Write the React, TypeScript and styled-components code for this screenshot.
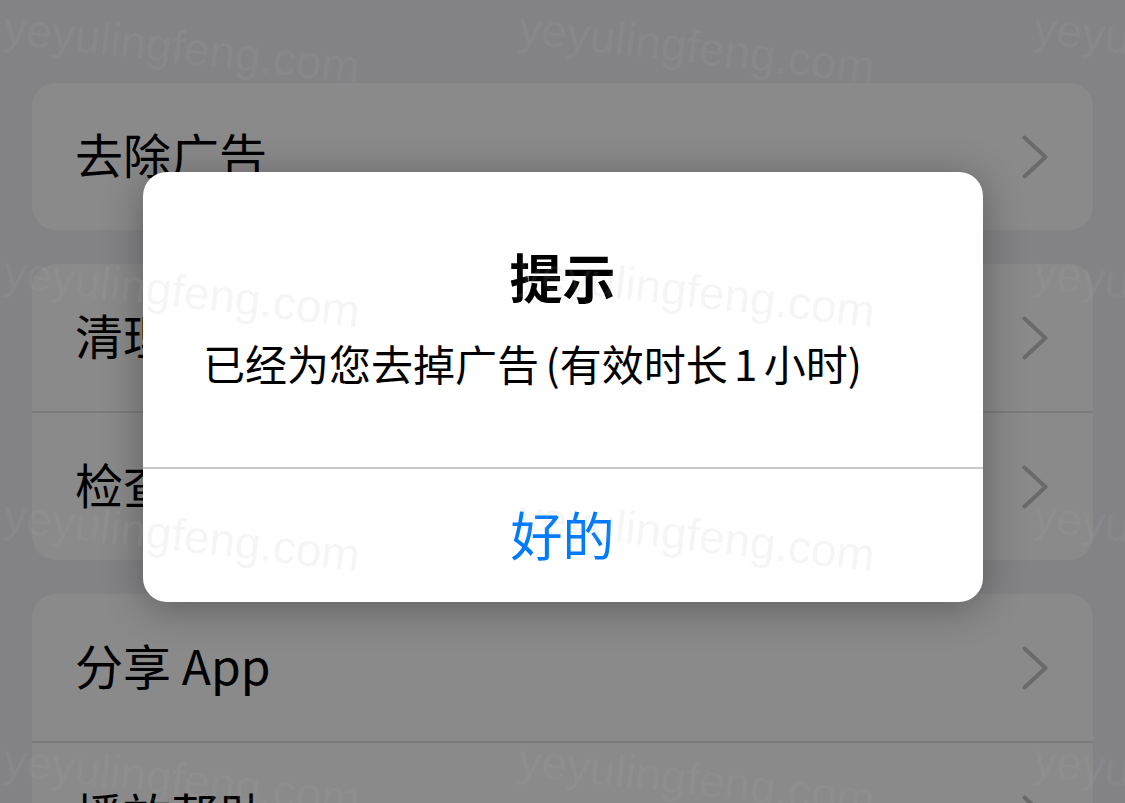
import React from "react";
import styled, { createGlobalStyle } from "styled-components";

const GlobalStyle = createGlobalStyle`
  html, body {
    margin: 0;
    padding: 0;
  }
  body {
    background: #f2f2f7;
    font-family: "Noto Sans CJK SC", sans-serif;
    overflow: hidden;
  }
  * { box-sizing: border-box; }
`;

const Page = styled.div`
  position: relative;
  width: 1125px;
  height: 803px;
  overflow: hidden;
  background: #f2f2f7;
  padding: 83px 32px 0;
  display: flex;
  flex-direction: column;
  gap: 34px;
`;

const Card = styled.div`
  flex-shrink: 0;
  background: #ffffff;
  border-radius: 24px;
  overflow: hidden;
  display: flex;
  flex-direction: column;
`;

const Row = styled.div`
  height: 147px;
  flex-shrink: 0;
  display: flex;
  align-items: center;
  justify-content: space-between;
  padding: 0 45px 0 43px;
`;

const RowLabel = styled.span`
  font-family: "Noto Sans CJK SC", sans-serif;
  font-size: 48px;
  line-height: 60px;
  color: #000;
  white-space: nowrap;
  margin-bottom: 8px;
`;

const RowDivider = styled.div`
  height: 2px;
  flex-shrink: 0;
  background: #e3e3e8;
`;

const Overlay = styled.div`
  position: absolute;
  inset: 0;
  background: rgba(0, 0, 0, 0.46);
  display: flex;
  align-items: center;
  justify-content: center;
  padding-bottom: 29px;
`;

const Dialog = styled.div`
  width: 840px;
  height: 430px;
  background: #ffffff;
  border-radius: 24px;
  box-shadow: 0 6px 40px rgba(0, 0, 0, 0.32);
  display: flex;
  flex-direction: column;
  overflow: hidden;
`;

const DialogBody = styled.div`
  flex: 1;
  display: flex;
  flex-direction: column;
  align-items: center;
  padding: 74px 40px 0;
  gap: 34px;
`;

const Title = styled.div`
  font-family: "Noto Sans CJK SC", sans-serif;
  font-size: 53px;
  line-height: 60px;
  font-weight: 700;
  color: #000;
`;

const Message = styled.div`
  font-family: "Noto Sans CJK SC", sans-serif;
  font-size: 42px;
  line-height: 54px;
  color: #000;
  white-space: nowrap;
  word-spacing: -3px;
  padding-right: 60px;
  margin-top: -4px;
`;

const DialogDivider = styled.div`
  height: 2px;
  flex-shrink: 0;
  background: #c9c8cd;
`;

const ActionButton = styled.button`
  height: 133px;
  flex-shrink: 0;
  border: none;
  background: transparent;
  padding: 0 0 4px;
  font-family: "Noto Sans CJK SC", sans-serif;
  font-size: 52px;
  line-height: 60px;
  color: #007aff;
  cursor: pointer;
`;

const Watermark = styled.div`
  position: absolute;
  inset: 0;
  pointer-events: none;
  display: grid;
  grid-template-columns: repeat(3, 515px);
  grid-auto-rows: 244px;
  padding: 4px 0 0 4px;
`;

const Mark = styled.span`
  font-family: "Liberation Sans", Arial, sans-serif;
  font-size: 46px;
  line-height: 46px;
  height: 46px;
  white-space: nowrap;
  color: rgba(177, 177, 177, 0.12);
  transform: rotate(6.5deg);
  transform-origin: 0 50%;
`;

const Chevron = () => (
  <svg width="26" height="44" viewBox="0 0 26 44" fill="none">
    <polyline
      points="2.5,2.5 23.5,22 2.5,41.5"
      stroke="#c4c4c7"
      strokeWidth="4"
      strokeLinecap="round"
      strokeLinejoin="round"
    />
  </svg>
);

const Item = ({ label }: { label: string }) => (
  <Row>
    <RowLabel>{label}</RowLabel>
    <Chevron />
  </Row>
);

const groups: string[][] = [
  ["去除广告"],
  ["清理缓存", "检查更新"],
  ["分享 App", "播放帮助"],
];

export default function App() {
  return (
    <>
      <GlobalStyle />
      <Page>
        {groups.map((g, gi) => (
          <Card key={gi}>
            {g.map((label, i) => (
              <React.Fragment key={label}>
                {i > 0 && <RowDivider />}
                <Item label={label} />
              </React.Fragment>
            ))}
          </Card>
        ))}
        <Overlay>
          <Dialog>
            <DialogBody>
              <Title>提示</Title>
              <Message>已经为您去掉广告 (有效时长 1 小时)</Message>
            </DialogBody>
            <DialogDivider />
            <ActionButton>好的</ActionButton>
          </Dialog>
        </Overlay>
        <Watermark>
          {Array.from({ length: 12 }).map((_, i) => (
            <Mark key={i}>yeyulingfeng.com</Mark>
          ))}
        </Watermark>
      </Page>
    </>
  );
}
